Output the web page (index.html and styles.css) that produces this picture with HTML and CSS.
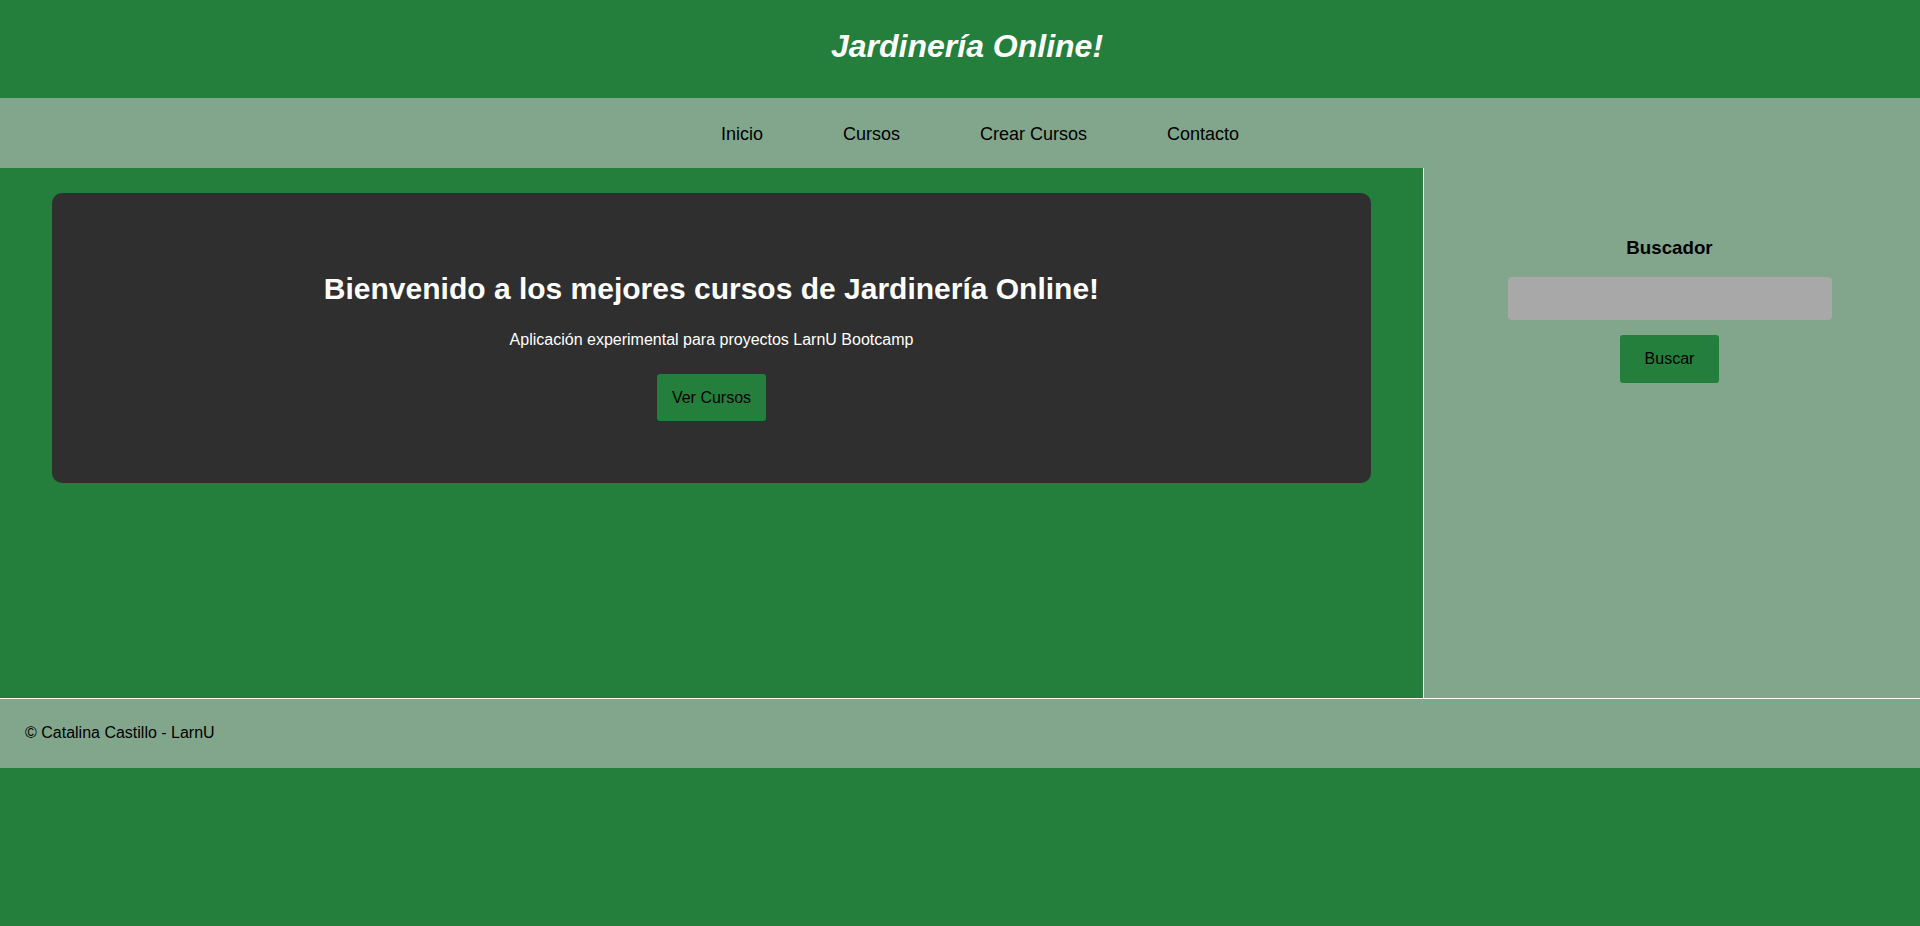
FILE: index.html
```html
<!DOCTYPE html>
<html lang="es">
<head>
<meta charset="utf-8">
<title>Jardinería Online!</title>
<link rel="stylesheet" href="styles.css">
</head>
<body>
<header class="site-header">
  <h1 class="site-title">Jardinería Online!</h1>
</header>
<nav class="site-nav">
  <ul class="nav-list">
    <li><a href="#" class="nav-link">Inicio</a></li>
    <li><a href="#" class="nav-link">Cursos</a></li>
    <li><a href="#" class="nav-link">Crear Cursos</a></li>
    <li><a href="#" class="nav-link">Contacto</a></li>
  </ul>
</nav>
<main class="layout">
  <section class="content">
    <div class="hero">
      <h2 class="hero-title">Bienvenido a los mejores cursos de Jardinería Online!</h2>
      <p class="hero-text">Aplicación experimental para proyectos LarnU Bootcamp</p>
      <button class="btn">Ver Cursos</button>
    </div>
  </section>
  <aside class="sidebar">
    <h3 class="sidebar-title">Buscador</h3>
    <input class="search-input" type="text">
    <button class="btn">Buscar</button>
  </aside>
</main>
<footer class="site-footer">
  <p class="footer-text">© Catalina Castillo - LarnU</p>
</footer>
</body>
</html>
```
FILE: styles.css
```css
* { box-sizing: border-box; }

body {
  margin: 0;
  background: #237f3b;
  font-family: "Liberation Sans", Arial, sans-serif;
  font-size: 16px;
  color: #000;
}

.site-header {
  height: 98px;
  padding: 28px 0 0 14px;
  text-align: center;
}

.site-title {
  margin: 0;
  font-size: 32px;
  font-style: italic;
  font-weight: bold;
  color: #fff;
  line-height: 37px;
}

.site-nav {
  height: 70px;
  padding-top: 2px;
  background: #82a68c;
  display: flex;
  align-items: center;
}

.nav-list {
  list-style: none;
  margin: 0;
  padding: 0 0 0 40px;
  width: 100%;
  display: flex;
  justify-content: center;
  gap: 80px;
  font-size: 18px;
  line-height: 21px;
}

.nav-link {
  color: #000;
  text-decoration: none;
}

.layout {
  display: grid;
  grid-template-columns: 1423px 1fr;
  min-height: 530px;
}

.content {
  padding: 25px 52px;
}

.hero {
  background: #2f2f2f;
  border-radius: 10px;
  padding: 60px 20px 62px;
  text-align: center;
  color: #fff;
}

.hero-title {
  margin: 19px 0 0;
  font-size: 30px;
  line-height: 34px;
  font-weight: bold;
}

.hero-text {
  margin: 25px 0 25px;
  line-height: 18px;
}

.btn {
  font-family: "Liberation Sans", Arial, sans-serif;
  font-size: 16px;
  line-height: 18px;
  color: #000;
  background: #237f3b;
  border: none;
  border-radius: 3px;
  padding: 14.5px 15px;
}

.sidebar {
  background: #82a68c;
  border-left: 1px solid #fff;
  padding: 50px 5px 0 0;
  display: flex;
  flex-direction: column;
  align-items: center;
}

.sidebar-title {
  margin: 18.72px 0;
  font-size: 18.72px;
  line-height: 21.5px;
  font-weight: bold;
}

.search-input {
  width: 324px;
  height: 43px;
  background: #a8a8a8;
  border: none;
  border-radius: 4px;
  margin: 0 0 15px;
}

.sidebar .btn {
  padding: 15px 25px;
}

.site-footer {
  background: #82a68c;
  border-top: 1px solid #fff;
  padding: 25px 25px 26px;
}

.footer-text {
  margin: 0;
  line-height: 18px;
}
```
